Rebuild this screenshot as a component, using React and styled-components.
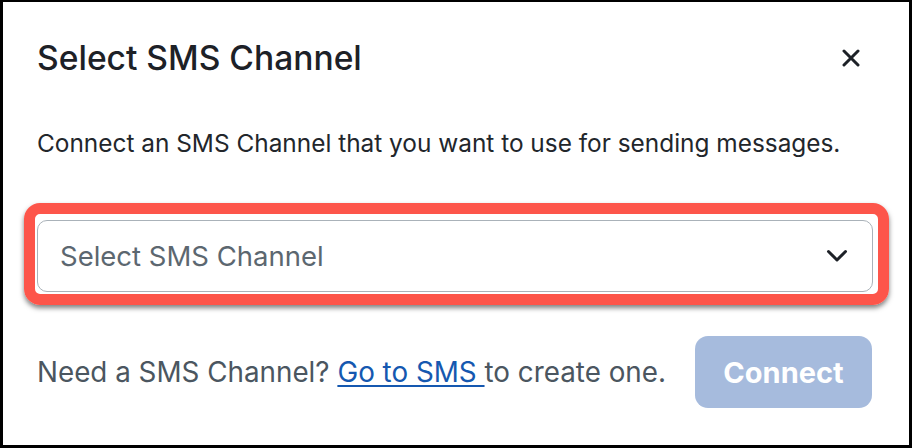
import React from 'react';
import styled, { createGlobalStyle } from 'styled-components';

const GlobalStyle = createGlobalStyle`
  html, body {
    margin: 0;
    padding: 0;
    background: #ffffff;
  }
  * {
    box-sizing: border-box;
  }
`;

const Frame = styled.div`
  width: 912px;
  height: 448px;
  border: 3px solid #000;
  border-top-width: 2px;
  background: #fff;
  padding: 36px 37px 0 34px;
  display: flex;
  flex-direction: column;
  font-family: Inter, "Liberation Sans", sans-serif;
`;

const Header = styled.div`
  display: flex;
  align-items: center;
  justify-content: space-between;
  height: 40px;
`;

const Title = styled.h2`
  margin: 0;
  font-size: 33.6px;
  line-height: 40px;
  font-weight: 500;
  color: #1d2127;
`;

const CloseButton = styled.button`
  width: 36px;
  height: 36px;
  margin-right: 3px;
  border: none;
  background: transparent;
  padding: 0;
  display: flex;
  align-items: center;
  justify-content: center;
  cursor: pointer;
`;

const Description = styled.p`
  margin: 49px 0 0;
  font-size: 24.4px;
  line-height: 32px;
  color: #22262b;
`;

const Highlight = styled.div`
  margin: 44px -17px 0 -13px;
  border: 11px solid #fd554a;
  border-radius: 16px;
  padding: 6px 5px 2px 2px;
  box-shadow: 0 3px 5px rgba(0, 0, 0, 0.5);
`;

const SelectBox = styled.div`
  height: 72px;
  border: 1px solid #aab2b9;
  border-radius: 10px;
  display: flex;
  align-items: center;
  justify-content: space-between;
  padding: 0 24px 0 22px;
  background: #fff;
`;

const Placeholder = styled.span`
  font-size: 27.5px;
  color: #5c6770;
`;

const Footer = styled.div`
  margin-top: 31px;
  display: flex;
  align-items: center;
  justify-content: space-between;
`;

const HelpText = styled.p`
  margin: 0;
  font-size: 27.8px;
  color: #4b5660;
`;

const Link = styled.a`
  color: #1558b0;
  text-decoration: underline;
  text-decoration-thickness: 2px;
  text-underline-offset: 3px;
`;

const ConnectButton = styled.button`
  width: 177px;
  height: 72px;
  border: none;
  border-radius: 13px;
  background: #a6bbdd;
  color: #fff;
  font-family: Inter, "Liberation Sans", sans-serif;
  font-size: 29px;
  font-weight: 700;
  cursor: not-allowed;
`;

const CloseIcon = () => (
  <svg width="18" height="18" viewBox="0 0 18 18" fill="none">
    <path d="M2 2 L16 16 M16 2 L2 16" stroke="#1d2127" strokeWidth="3" strokeLinecap="round" />
  </svg>
);

const Chevron = () => (
  <svg width="22" height="14" viewBox="0 0 22 14" fill="none">
    <path d="M2.5 2.5 L11 11 L19.5 2.5" stroke="#1d2127" strokeWidth="3" strokeLinecap="round" strokeLinejoin="round" />
  </svg>
);

export default function App() {
  return (
    <>
      <GlobalStyle />
      <Frame>
        <Header>
          <Title>Select SMS Channel</Title>
          <CloseButton aria-label="Close">
            <CloseIcon />
          </CloseButton>
        </Header>
        <Description>Connect an SMS Channel that you want to use for sending messages.</Description>
        <Highlight>
          <SelectBox>
            <Placeholder>Select SMS Channel</Placeholder>
            <Chevron />
          </SelectBox>
        </Highlight>
        <Footer>
          <HelpText>
            Need a SMS Channel? <Link href="#">Go to SMS </Link>to create one.
          </HelpText>
          <ConnectButton disabled>Connect</ConnectButton>
        </Footer>
      </Frame>
    </>
  );
}
